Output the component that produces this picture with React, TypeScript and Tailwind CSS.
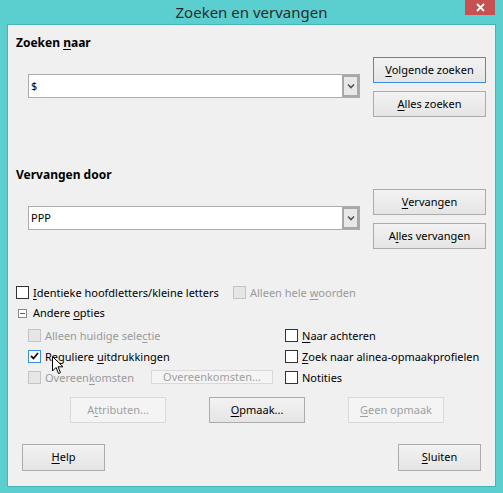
import React from "react";
import clsx from "clsx";

const font = { fontFamily: '"Noto Sans", "Open Sans", sans-serif' };

function U({ children }: { children: React.ReactNode }) {
  return <span className="underline underline-offset-2">{children}</span>;
}

function Btn({
  children,
  disabled,
  focus,
  className,
}: {
  children: React.ReactNode;
  disabled?: boolean;
  focus?: boolean;
  className?: string;
}) {
  return (
    <div
      className={clsx(
        "flex items-center justify-center border text-[11px]",
        disabled
          ? "border-[#d9d9d9] bg-[#f4f4f4] text-[#a0a0a0]"
          : "bg-gradient-to-b from-[#f2f2f2] to-[#e5e5e5] text-black",
        !disabled && (focus ? "border-[#3c8ddd]" : "border-[#acacac]"),
        className
      )}
    >
      {children}
    </div>
  );
}

function Combo({ value }: { value: string }) {
  return (
    <div className="ml-[12px] flex h-[24px] w-[332px] border border-[#acacac] bg-white">
      <div className="flex flex-1 items-center pl-[2px] text-[11px] text-black">{value}</div>
      <div className="flex w-[17px] items-center justify-center border-2 border-[#a8a8a8] bg-[#e8e8e8]">
        <svg width="8" height="6" viewBox="0 0 8 6">
          <path d="M1 1.5 L4 4.5 L7 1.5" fill="none" stroke="#555" strokeWidth="1.6" />
        </svg>
      </div>
    </div>
  );
}

function Check({
  children,
  disabled,
  checked,
  hover,
}: {
  children: React.ReactNode;
  disabled?: boolean;
  checked?: boolean;
  hover?: boolean;
}) {
  return (
    <div className="flex h-[16px] items-center">
      <div
        className={clsx(
          "flex h-[13px] w-[13px] items-center justify-center border",
          disabled
            ? "border-[#c4c4c4] bg-[#e6e6e6]"
            : hover
            ? "border-[#3c8ddd] bg-white"
            : "border-[#333] bg-white"
        )}
      >
        {checked && (
          <svg width="9" height="8" viewBox="0 0 9 8">
            <path d="M1 4 L3.5 6.5 L8 1" fill="none" stroke="#111" strokeWidth="1.8" />
          </svg>
        )}
      </div>
      <span
        className={clsx(
          "ml-[4px] text-[11px] leading-none",
          disabled ? "text-[#9a9a9a]" : "text-black"
        )}
      >
        {children}
      </span>
    </div>
  );
}

function Section({
  label,
  value,
  buttons,
}: {
  label: React.ReactNode;
  value: string;
  buttons: React.ReactNode;
}) {
  return (
    <div className="flex">
      <div className="w-[344px]">
        <div className="h-[16px] text-[12px] font-bold leading-[16px] text-black">{label}</div>
        <div className="mt-[23px]">
          <Combo value={value} />
        </div>
      </div>
      <div className="ml-[13px] mt-[22px] flex flex-col gap-[8px]">{buttons}</div>
    </div>
  );
}

export default function App() {
  return (
    <div className="relative h-[493px] w-[503px] bg-[#5bcfcf]" style={font}>
      {/* Title bar */}
      <div className="relative h-[24px]">
        <div className="pt-[1px] text-center text-[15px] leading-[22px] text-[#2b2b2b]">
          Zoeken en vervangen
        </div>
        <div className="absolute right-[8px] top-0 flex h-[15px] w-[30px] items-center justify-center bg-[#c75050]">
          <svg width="9" height="9" viewBox="0 0 9 9">
            <path d="M1 1 L8 8 M8 1 L1 8" stroke="#fff" strokeWidth="1.8" />
          </svg>
        </div>
      </div>

      {/* Client area */}
      <div className="mx-[7px] h-[463px] border border-[#49b4b4] bg-[#f0f0f0] pl-[8px] pt-[10px]">
        <Section
          label={
            <>
              Zoeken <U>n</U>aar
            </>
          }
          value="$"
          buttons={
            <>
              <Btn focus className="h-[26px] w-[113px]">
                <span><U>V</U>olgende zoeken</span>
              </Btn>
              <Btn className="h-[26px] w-[113px]">
                <span><U>A</U>lles zoeken</span>
              </Btn>
            </>
          }
        />

        <div className="mt-[50px]">
          <Section
            label="Vervangen door"
            value="PPP"
            buttons={
              <>
                <Btn className="h-[26px] w-[113px]">
                  <span><U>V</U>ervangen</span>
                </Btn>
                <Btn className="h-[26px] w-[113px]">
                  <span>A<U>l</U>les vervangen</span>
                </Btn>
              </>
            }
          />
        </div>

        {/* Options */}
        <div className="mt-[35px] flex">
          <div className="w-[217px]">
            <Check>
              <U>I</U>dentieke hoofdletters/kleine letters
            </Check>
          </div>
          <Check disabled>
            Alleen hele <U>w</U>oorden
          </Check>
        </div>

        <div className="mt-[5px] flex h-[16px] items-center pl-[2px]">
          <div className="flex h-[9px] w-[9px] items-center justify-center border border-[#8a8a8a] bg-white">
            <div className="h-px w-[5px] bg-[#4a5a7a]" />
          </div>
          <span className="ml-[6px] text-[11px] text-black">
            Andere <U>o</U>pties
          </span>
        </div>

        <div className="mt-[6px] flex pl-[12px]">
          <div className="flex w-[257px] flex-col gap-[5px]">
            <Check disabled>
              Alleen huidige sele<U>c</U>tie
            </Check>
            <Check checked hover>
              Reguliere <U>u</U>itdrukkingen
            </Check>
            <div className="flex items-center">
              <Check disabled>
                Overeen<U>k</U>omsten
              </Check>
              <Btn disabled className="ml-[17px] h-[14px] w-[122px]">
                Overeenkomsten...
              </Btn>
            </div>
          </div>
          <div className="flex flex-col gap-[5px]">
            <Check>
              <U>N</U>aar achteren
            </Check>
            <Check>
              <U>Z</U>oek naar alinea-opmaakprofielen
            </Check>
            <Check>Notities</Check>
          </div>
        </div>

        <div className="mt-[12px] flex pl-[54px]">
          <Btn disabled className="h-[26px] w-[96px]">
            <span>A<U>t</U>tributen...</span>
          </Btn>
          <Btn className="ml-[43px] h-[26px] w-[96px]">
            <span><U>O</U>pmaak...</span>
          </Btn>
          <Btn disabled className="ml-[43px] h-[26px] w-[96px]">
            <span><U>G</U>een opmaak</span>
          </Btn>
        </div>

        <div className="mt-[21px] flex justify-between pl-[6px] pr-[14px]">
          <Btn className="h-[27px] w-[83px]">
            <span><U>H</U>elp</span>
          </Btn>
          <Btn className="h-[27px] w-[83px]">
            <span><U>S</U>luiten</span>
          </Btn>
        </div>
      </div>

      {/* Mouse pointer */}
      <svg className="absolute left-[52px] top-[356px]" width="12" height="19" viewBox="0 0 12 19">
        <path
          d="M0.5 0.5 L0.5 15 L4 11.5 L6.5 17.5 L8.5 16.7 L6 10.8 L11 10.8 Z"
          fill="#fff"
          stroke="#000"
          strokeWidth="1"
          strokeLinejoin="round"
        />
      </svg>
    </div>
  );
}
